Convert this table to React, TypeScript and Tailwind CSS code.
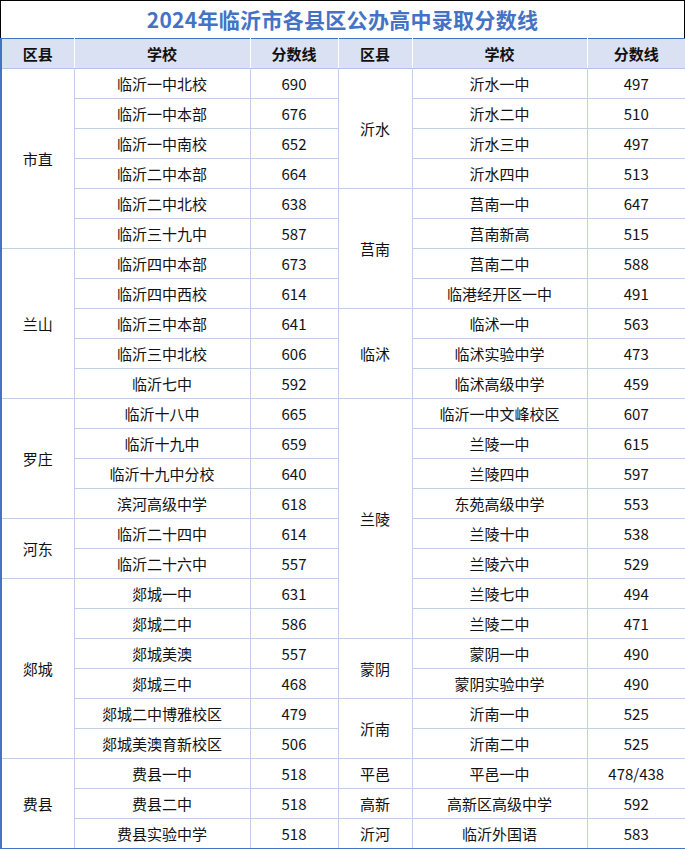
const left: { county: string; schools: [string, string][] }[] = [
  { county: '市直', schools: [['临沂一中北校', '690'], ['临沂一中本部', '676'], ['临沂一中南校', '652'], ['临沂二中本部', '664'], ['临沂二中北校', '638'], ['临沂三十九中', '587']] },
  { county: '兰山', schools: [['临沂四中本部', '673'], ['临沂四中西校', '614'], ['临沂三中本部', '641'], ['临沂三中北校', '606'], ['临沂七中', '592']] },
  { county: '罗庄', schools: [['临沂十八中', '665'], ['临沂十九中', '659'], ['临沂十九中分校', '640'], ['滨河高级中学', '618']] },
  { county: '河东', schools: [['临沂二十四中', '614'], ['临沂二十六中', '557']] },
  { county: '郯城', schools: [['郯城一中', '631'], ['郯城二中', '586'], ['郯城美澳', '557'], ['郯城三中', '468'], ['郯城二中博雅校区', '479'], ['郯城美澳育新校区', '506']] },
  { county: '费县', schools: [['费县一中', '518'], ['费县二中', '518'], ['费县实验中学', '518']] },
];

const right: { county: string; schools: [string, string][] }[] = [
  { county: '沂水', schools: [['沂水一中', '497'], ['沂水二中', '510'], ['沂水三中', '497'], ['沂水四中', '513']] },
  { county: '莒南', schools: [['莒南一中', '647'], ['莒南新高', '515'], ['莒南二中', '588'], ['临港经开区一中', '491']] },
  { county: '临沭', schools: [['临沭一中', '563'], ['临沭实验中学', '473'], ['临沭高级中学', '459']] },
  { county: '兰陵', schools: [['临沂一中文峰校区', '607'], ['兰陵一中', '615'], ['兰陵四中', '597'], ['东苑高级中学', '553'], ['兰陵十中', '538'], ['兰陵六中', '529'], ['兰陵七中', '494'], ['兰陵二中', '471']] },
  { county: '蒙阴', schools: [['蒙阴一中', '490'], ['蒙阴实验中学', '490']] },
  { county: '沂南', schools: [['沂南一中', '525'], ['沂南二中', '525']] },
  { county: '平邑', schools: [['平邑一中', '478/438']] },
  { county: '高新', schools: [['高新区高级中学', '592']] },
  { county: '沂河', schools: [['临沂外国语', '583']] },
];

type Cell = { county?: string; span?: number; school: string; score: string };

// flatten groups into rows, county only on the first row of each group
const flatten = (groups: typeof left): Cell[] =>
  groups.flatMap((g) =>
    g.schools.map(([school, score], i) =>
      i === 0 ? { county: g.county, span: g.schools.length, school, score } : { school, score }
    )
  );

const leftRows = flatten(left);
const rightRows = flatten(right);

const td = 'border border-[#c2cfe8] text-center align-middle p-0';
const th = 'border-x border-white border-b border-b-[#b4c6e7] text-center align-middle font-bold p-0';

export default function App() {
  return (
    <div className="w-[685px] bg-white text-[15px] text-[#111] leading-none" style={{ fontFamily: '"Noto Sans CJK SC", "Noto Sans", sans-serif' }}>
      <div className="h-[38px] border border-b-0 border-black flex items-center justify-center">
        <span className="text-[21px] font-bold text-[#4472c4] tracking-[0.3px]">2024年临沂市各县区公办高中录取分数线</span>
      </div>
      <table className="w-[685px] table-fixed border-collapse border-l-2 border-r-2 border-b-2 border-[#4472c4]">
        <colgroup>
          <col className="w-[73px]" />
          <col className="w-[176px]" />
          <col className="w-[88px]" />
          <col className="w-[74px]" />
          <col className="w-[175px]" />
          <col className="w-[99px]" />
        </colgroup>
        <thead>
          <tr className="h-[30px] bg-[#d9e1f2] border-t border-[#4472c4]">
            <th className={th}>区县</th>
            <th className={th}>学校</th>
            <th className={th}>分数线</th>
            <th className={th}>区县</th>
            <th className={th}>学校</th>
            <th className={th}>分数线</th>
          </tr>
        </thead>
        <tbody>
          {leftRows.map((l, i) => {
            const r = rightRows[i];
            return (
              <tr key={i} className="h-[30px]">
                {l.county && <td rowSpan={l.span} className={td}>{l.county}</td>}
                <td className={td}>{l.school}</td>
                <td className={td}>{l.score}</td>
                {r.county && <td rowSpan={r.span} className={td}>{r.county}</td>}
                <td className={td}>{r.school}</td>
                <td className={td}>{r.score}</td>
              </tr>
            );
          })}
        </tbody>
      </table>
    </div>
  );
}
